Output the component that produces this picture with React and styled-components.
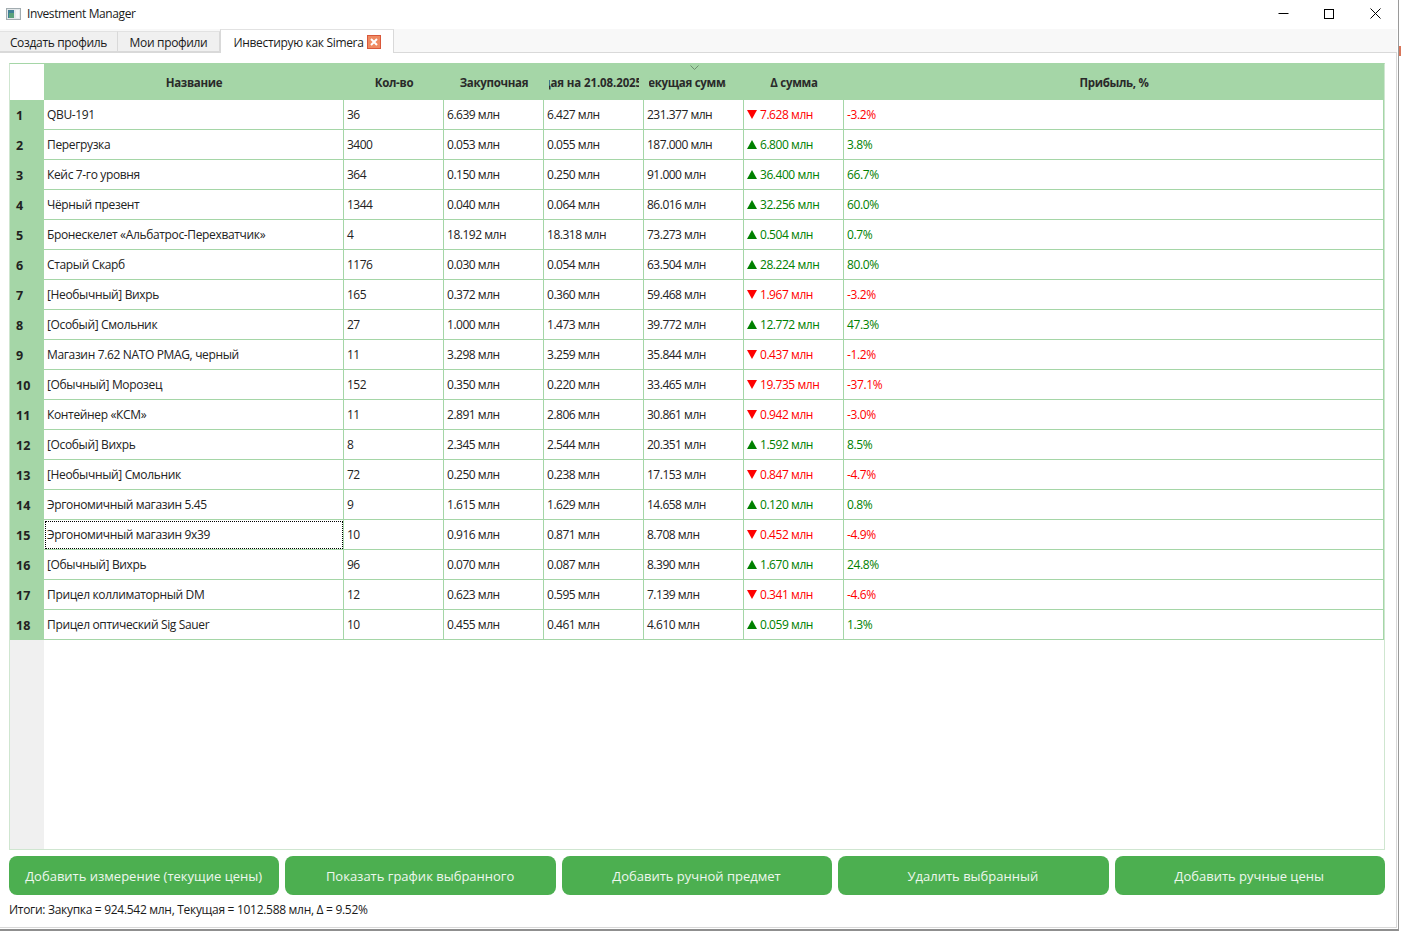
import React from 'react';
import styled, { createGlobalStyle } from 'styled-components';

const GlobalStyle = createGlobalStyle`
  html, body {
    margin: 0;
    padding: 0;
    background: #fff;
  }
  body {
    font-family: "Open Sans", "Noto Sans", sans-serif;
    font-size: 12px;
    color: #222;
    overflow: hidden;
  }
`;

const GREEN = '#a5d6a7';

const Window = styled.div`
  width: 1399px;
  height: 931px;
  box-sizing: border-box;
  border-right: 1px solid #9a9a9a;
  border-bottom: 2px solid #8f8f8f;
  display: flex;
  flex-direction: column;
  background: #fff;
`;

const BehindSliver = styled.div`
  position: absolute;
  left: 1399px;
  top: 46px;
  width: 2px;
  height: 10px;
  background: #d9765a;
`;

const TitleBar = styled.div`
  height: 29px;
  flex: none;
  box-sizing: border-box;
  padding: 0 0 2px 6px;
  display: flex;
  align-items: center;
`;

const AppTitle = styled.span`
  margin-left: 6px;
  font-size: 12px;
  color: #1a1a1a;
  letter-spacing: -0.4px;
  flex: 1;
`;

const WinButton = styled.div`
  width: 46px;
  height: 27px;
  display: flex;
  align-items: center;
  justify-content: center;
`;

const TabBar = styled.div`
  height: 24px;
  flex: none;
  display: flex;
  align-items: flex-end;
  background: #f8f8f8;
  border-bottom: 1px solid #d9d9d9;
  box-sizing: border-box;
  margin-right: 1px;
`;

const Tab = styled.div`
  box-sizing: border-box;
  display: flex;
  align-items: center;
  justify-content: center;
  gap: 3px;
  font-size: 12px;
  letter-spacing: -0.33px;
  color: #1a1a1a;
  width: ${(p) => p.$width}px;
  height: ${(p) => (p.$active ? 24 : 21)}px;
  margin-bottom: ${(p) => (p.$active ? -1 : 0)}px;
  padding-top: ${(p) => (p.$active ? 2 : 1)}px;
  background: ${(p) => (p.$active ? '#fff' : '#f0f0f0')};
  border-top: 1px solid #e2e2e2;
  border-right: 1px solid #d9d9d9;
  border-left: ${(p) => (p.$active ? '1px solid #d9d9d9' : 'none')};
  border-bottom: ${(p) => (p.$active ? 'none' : '1px solid #d9d9d9')};
  svg {
    margin-top: -2px;
  }
`;

const Pane = styled.div`
  flex: 1;
  min-height: 0;
  display: flex;
  flex-direction: column;
  padding: 10px 11px 0 9px;
  margin: 0 1px 1px 0;
  border-right: 1px solid #d9d9d9;
  border-bottom: 1px solid #d9d9d9;
`;

const TableFrame = styled.div`
  height: 787px;
  flex: none;
  box-sizing: border-box;
  border: 1px solid #cfe6d0;
  border-top-color: ${GREEN};
  display: flex;
  background: #fff;
`;

const Gutter = styled.div`
  width: 34px;
  flex: none;
  background: #f0f0f0;
  display: flex;
  flex-direction: column;
`;

const Corner = styled.div`
  height: 36px;
  background: #fff;
`;

const RowNumber = styled.div`
  height: 30px;
  background: ${GREEN};
  box-sizing: border-box;
  padding-left: 6px;
  display: flex;
  align-items: center;
  font-weight: 700;
  font-size: 12.5px;
  color: #222;
`;

const Sheet = styled.div`
  flex: 1;
  min-width: 0;
`;

const Columns = styled.div`
  display: grid;
  grid-template-columns: 300px repeat(5, 100px) 100px 1fr;
`;

const HeaderCell = styled.div`
  height: 36px;
  box-sizing: border-box;
  background: ${GREEN};
  padding: 0 5px;
  grid-column: ${(p) => (p.$wide ? 'span 2' : 'auto')};
  display: flex;
  align-items: center;
  font-weight: 700;
  font-size: 11.5px;
  letter-spacing: -0.3px;
  color: #2a2a2a;
  position: relative;
`;

const HeaderClip = styled.div`
  flex: 1;
  min-width: 0;
  overflow: hidden;
  display: flex;
  justify-content: ${(p) => (p.$overhang ? 'flex-end' : 'center')};
  margin-right: ${(p) => p.$inset || 0}px;
  white-space: nowrap;
  letter-spacing: ${(p) => p.$spacing ?? -0.3}px;
  span {
    flex: none;
    margin-right: ${(p) => -(p.$overhang || 0)}px;
  }
`;

const SortMark = styled.svg`
  position: absolute;
  top: 1px;
  left: 46px;
`;

const Cell = styled.div`
  height: 30px;
  box-sizing: border-box;
  border-right: 1px solid ${GREEN};
  border-bottom: 1px solid ${GREEN};
  padding: 0 3px;
  grid-column: ${(p) => (p.$wide ? 'span 2' : 'auto')};
  display: flex;
  align-items: center;
  gap: 2px;
  white-space: nowrap;
  overflow: hidden;
  font-size: 12px;
  letter-spacing: ${(p) => p.$spacing ?? -0.35}px;
  color: ${(p) => p.$color || '#222'};
  outline: ${(p) => (p.$focus ? '1px dotted #000' : 'none')};
  outline-offset: -2px;
`;

const Arrow = styled.svg`
  flex: none;
  margin-right: 1px;
`;

const ButtonRow = styled.div`
  margin-top: 6px;
  height: 39px;
  flex: none;
  display: grid;
  grid-template-columns: repeat(5, 1fr);
  gap: 6px;
`;

const ActionButton = styled.button`
  border: none;
  border-radius: 8px;
  background: #4caf50;
  color: #eef7ee;
  font-family: inherit;
  font-size: 13px;
  padding: 0 1px 0 0;
`;

const StatusLine = styled.div`
  height: 29px;
  flex: none;
  display: flex;
  align-items: center;
  font-size: 12px;
  letter-spacing: -0.3px;
  color: #1a1a1a;
`;

const headers = [
  { title: 'Название' },
  { title: 'Кол-во' },
  { title: 'Закупочная' },
  { title: 'Текущая на 21.08.2025', overhang: 3, spacing: -0.12 },
  { title: 'Текущая сумма', overhang: 6, inset: 13, sorted: true },
  { title: 'Δ сумма' },
  { title: 'Прибыль, %', wide: true },
];

const rows = [
  ['QBU-191', '36', '6.639', '6.427', '231.377', '7.628', '-3.2%'],
  ['Перегрузка', '3400', '0.053', '0.055', '187.000', '6.800', '3.8%'],
  ['Кейс 7-го уровня', '364', '0.150', '0.250', '91.000', '36.400', '66.7%'],
  ['Чёрный презент', '1344', '0.040', '0.064', '86.016', '32.256', '60.0%'],
  ['Бронескелет «Альбатрос-Перехватчик»', '4', '18.192', '18.318', '73.273', '0.504', '0.7%'],
  ['Старый Скарб', '1176', '0.030', '0.054', '63.504', '28.224', '80.0%'],
  ['[Необычный] Вихрь', '165', '0.372', '0.360', '59.468', '1.967', '-3.2%'],
  ['[Особый] Смольник', '27', '1.000', '1.473', '39.772', '12.772', '47.3%'],
  ['Магазин 7.62 NATO PMAG, черный', '11', '3.298', '3.259', '35.844', '0.437', '-1.2%'],
  ['[Обычный] Морозец', '152', '0.350', '0.220', '33.465', '19.735', '-37.1%'],
  ['Контейнер «КСМ»', '11', '2.891', '2.806', '30.861', '0.942', '-3.0%'],
  ['[Особый] Вихрь', '8', '2.345', '2.544', '20.351', '1.592', '8.5%'],
  ['[Необычный] Смольник', '72', '0.250', '0.238', '17.153', '0.847', '-4.7%'],
  ['Эргономичный магазин 5.45', '9', '1.615', '1.629', '14.658', '0.120', '0.8%'],
  ['Эргономичный магазин 9х39', '10', '0.916', '0.871', '8.708', '0.452', '-4.9%'],
  ['[Обычный] Вихрь', '96', '0.070', '0.087', '8.390', '1.670', '24.8%'],
  ['Прицел коллиматорный DM', '12', '0.623', '0.595', '7.139', '0.341', '-4.6%'],
  ['Прицел оптический Sig Sauer', '10', '0.455', '0.461', '4.610', '0.059', '1.3%'],
];

const buttons = [
  'Добавить измерение (текущие цены)',
  'Показать график выбранного',
  'Добавить ручной предмет',
  'Удалить выбранный',
  'Добавить ручные цены',
];

const AppIcon = () => (
  <svg width="15" height="14" viewBox="0 0 15 14">
    <rect x="0.5" y="1.5" width="14" height="11" fill="#e4e8ea" stroke="#a2acb0" />
    <rect x="2" y="3" width="6" height="8" fill="#3f7f96" />
    <rect x="3" y="6" width="5" height="5" fill="#5aa27a" />
    <rect x="10" y="3" width="3" height="8" fill="#f5f7f8" />
  </svg>
);

const CloseTabIcon = () => (
  <svg width="14" height="14" viewBox="0 0 14 14">
    <rect x="0.5" y="0.5" width="13" height="13" fill="#ef8a62" stroke="#d9583a" />
    <path d="M4 4l6 6M10 4l-6 6" stroke="#fff" strokeWidth="2" />
  </svg>
);

const Delta = ({ value, down }) => (
  <>
    <Arrow width="10" height="9" viewBox="0 0 10 9">
      {down ? <path d="M0 0h10L5 9z" fill="#f00" /> : <path d="M5 0l5 9H0z" fill="#008000" />}
    </Arrow>
    {value} млн
  </>
);

const App = () => (
  <>
    <GlobalStyle />
    <BehindSliver />
    <Window>
      <TitleBar>
        <AppIcon />
        <AppTitle>Investment Manager</AppTitle>
        <WinButton>
          <svg width="11" height="11" viewBox="0 0 11 11">
            <path d="M0.5 5.5h10" stroke="#000" />
          </svg>
        </WinButton>
        <WinButton>
          <svg width="10" height="10" viewBox="0 0 10 10">
            <rect x="0.5" y="0.5" width="9" height="9" fill="none" stroke="#000" />
          </svg>
        </WinButton>
        <WinButton>
          <svg width="11" height="11" viewBox="0 0 11 11">
            <path d="M0.5 0.5l10 10M10.5 0.5l-10 10" stroke="#000" />
          </svg>
        </WinButton>
      </TitleBar>
      <TabBar>
        <Tab $width={118}>Создать профиль</Tab>
        <Tab $width={102}>Мои профили</Tab>
        <Tab $width={174} $active>
          Инвестирую как Simera
          <CloseTabIcon />
        </Tab>
      </TabBar>
      <Pane>
        <TableFrame>
          <Gutter>
            <Corner />
            {rows.map((row, i) => (
              <RowNumber key={row[0]}>{i + 1}</RowNumber>
            ))}
          </Gutter>
          <Sheet>
            <Columns>
              {headers.map((h) => (
                <HeaderCell key={h.title} $wide={h.wide}>
                  {h.sorted && (
                    <SortMark width="9" height="5" viewBox="0 0 9 5">
                      <path d="M0.5 0.5l4 4 4-4" fill="none" stroke="#6f8f70" />
                    </SortMark>
                  )}
                  <HeaderClip $overhang={h.overhang} $inset={h.inset} $spacing={h.spacing}>
                    <span>{h.title}</span>
                  </HeaderClip>
                </HeaderCell>
              ))}
              {rows.map((row, r) => {
                const loss = row[6].startsWith('-');
                const color = loss ? '#f00' : '#008000';
                return (
                  <React.Fragment key={row[0]}>
                    <Cell $focus={r === 14}>{row[0]}</Cell>
                    <Cell $spacing={-0.5}>{row[1]}</Cell>
                    <Cell $spacing={-0.48}>{row[2]} млн</Cell>
                    <Cell $spacing={-0.48}>{row[3]} млн</Cell>
                    <Cell $spacing={-0.5}>{row[4]} млн</Cell>
                    <Cell $color={color} $spacing={-0.45}>
                      <Delta value={row[5]} down={loss} />
                    </Cell>
                    <Cell $color={color} $wide>
                      {row[6]}
                    </Cell>
                  </React.Fragment>
                );
              })}
            </Columns>
          </Sheet>
        </TableFrame>
        <ButtonRow>
          {buttons.map((label) => (
            <ActionButton key={label}>{label}</ActionButton>
          ))}
        </ButtonRow>
        <StatusLine>Итоги: Закупка = 924.542 млн, Текущая = 1012.588 млн, Δ = 9.52%</StatusLine>
      </Pane>
    </Window>
  </>
);

export default App;
